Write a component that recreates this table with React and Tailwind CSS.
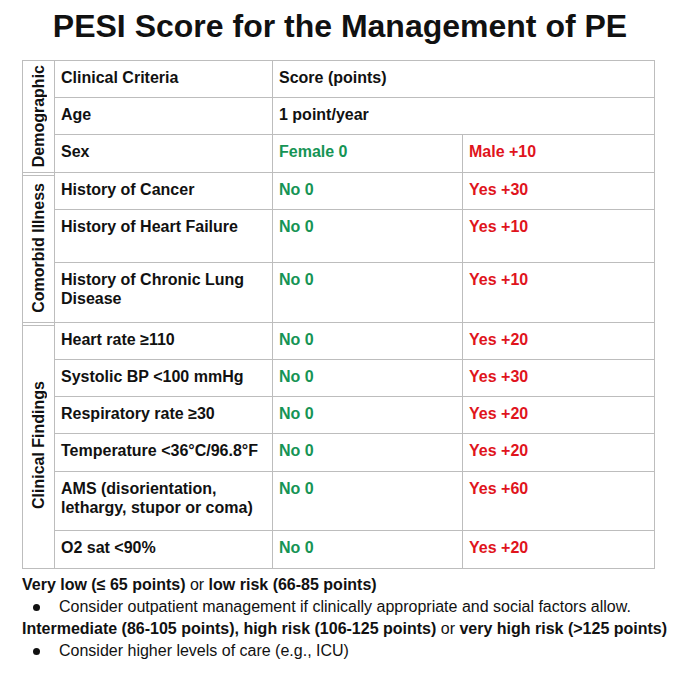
import React from 'react';

const GREEN = 'text-[#169455]';
const RED = 'text-[#e0141c]';

// rows: [criteria, score-left, score-right (null = colspan), height class]
const rows = [
  { label: 'Clinical Criteria', left: 'Score (points)', right: null, h: 'h-[37px]' },
  { label: 'Age', left: '1 point/year', right: null, h: 'h-[37px]' },
  { label: 'Sex', left: 'Female 0', right: 'Male +10', h: 'h-[38px]' },
  { label: 'History of Cancer', left: 'No 0', right: 'Yes +30', h: 'h-[37px]' },
  { label: 'History of Heart Failure', left: 'No 0', right: 'Yes +10', h: 'h-[53px]' },
  { label: 'History of Chronic Lung Disease', left: 'No 0', right: 'Yes +10', h: 'h-[60px]' },
  { label: 'Heart rate ≥110', left: 'No 0', right: 'Yes +20', h: 'h-[37px]' },
  { label: 'Systolic BP <100 mmHg', left: 'No 0', right: 'Yes +30', h: 'h-[37px]' },
  { label: 'Respiratory rate ≥30', left: 'No 0', right: 'Yes +20', h: 'h-[37px]' },
  { label: 'Temperature <36°C/96.8°F', left: 'No 0', right: 'Yes +20', h: 'h-[38px]' },
  { label: 'AMS (disorientation, lethargy, stupor or coma)', left: 'No 0', right: 'Yes +60', h: 'h-[59px]' },
  { label: 'O2 sat <90%', left: 'No 0', right: 'Yes +20', h: 'h-[38px]' },
];

const groups = [
  { name: 'Demographic', rows: [0, 1, 2], first: true },
  { name: 'Comorbid Illness', rows: [3, 4, 5] },
  { name: 'Clinical Findings', rows: [6, 7, 8, 9, 10, 11] },
];

const cell = 'border-r border-b border-[#bdbdbd] px-[6px] pt-[7px] leading-[19px]';

const Row = ({ row }) => {
  const colored = row.right !== null;
  return (
    <div className={`flex ${row.h}`}>
      <div className={`${cell} w-[218px]`}>{row.label}</div>
      {colored ? (
        <>
          <div className={`${cell} w-[190px] ${GREEN}`}>{row.left}</div>
          <div className={`${cell} w-[192px] ${RED}`}>{row.right}</div>
        </>
      ) : (
        <div className={`${cell} w-[382px]`}>{row.left}</div>
      )}
    </div>
  );
};

const Bullet = ({ children }) => (
  <div className="flex items-center">
    <span className="w-[37px] flex justify-start pl-[11px]">
      <span className="block w-[7px] h-[7px] rounded-full bg-[#111] mt-[1px]" />
    </span>
    <span>{children}</span>
  </div>
);

export default function App() {
  return (
    <div className="w-[680px] h-[680px] bg-white text-[#111] font-['Liberation_Sans',Arial,sans-serif]">
      <h1 className="pt-[8px] text-center text-[32px] leading-[36px] font-bold">
        PESI Score for the Management of PE
      </h1>

      {/* score table */}
      <div className="mt-[16px] ml-[22px] w-[633px] border-t border-l border-[#bdbdbd] text-[16px] font-bold">
        {groups.map((g) => (
          <div key={g.name} className="flex">
            <div
              className={`w-[32px] border-r border-b border-[#bdbdbd] flex items-center justify-center ${
                g.first ? '' : 'shadow-[inset_0_2px_0_#fff,inset_0_3px_0_#bdbdbd]'
              }`}
            >
              <span className="[writing-mode:vertical-rl] rotate-180 whitespace-nowrap leading-[19px]">
                {g.name}
              </span>
            </div>
            <div className="flex flex-col">
              {g.rows.map((i) => (
                <Row key={i} row={rows[i]} />
              ))}
            </div>
          </div>
        ))}
      </div>

      {/* risk notes */}
      <div className="mt-[5px] ml-[22px] text-[16px] leading-[22px]">
        <p>
          <b>Very low (≤ 65 points)</b> or <b>low risk (66-85 points)</b>
        </p>
        <Bullet>Consider outpatient management if clinically appropriate and social factors allow.</Bullet>
        <p>
          <b>Intermediate (86-105 points), high risk (106-125 points)</b> or <b>very high risk (&gt;125 points)</b>
        </p>
        <Bullet>Consider higher levels of care (e.g., ICU)</Bullet>
      </div>
    </div>
  );
}
